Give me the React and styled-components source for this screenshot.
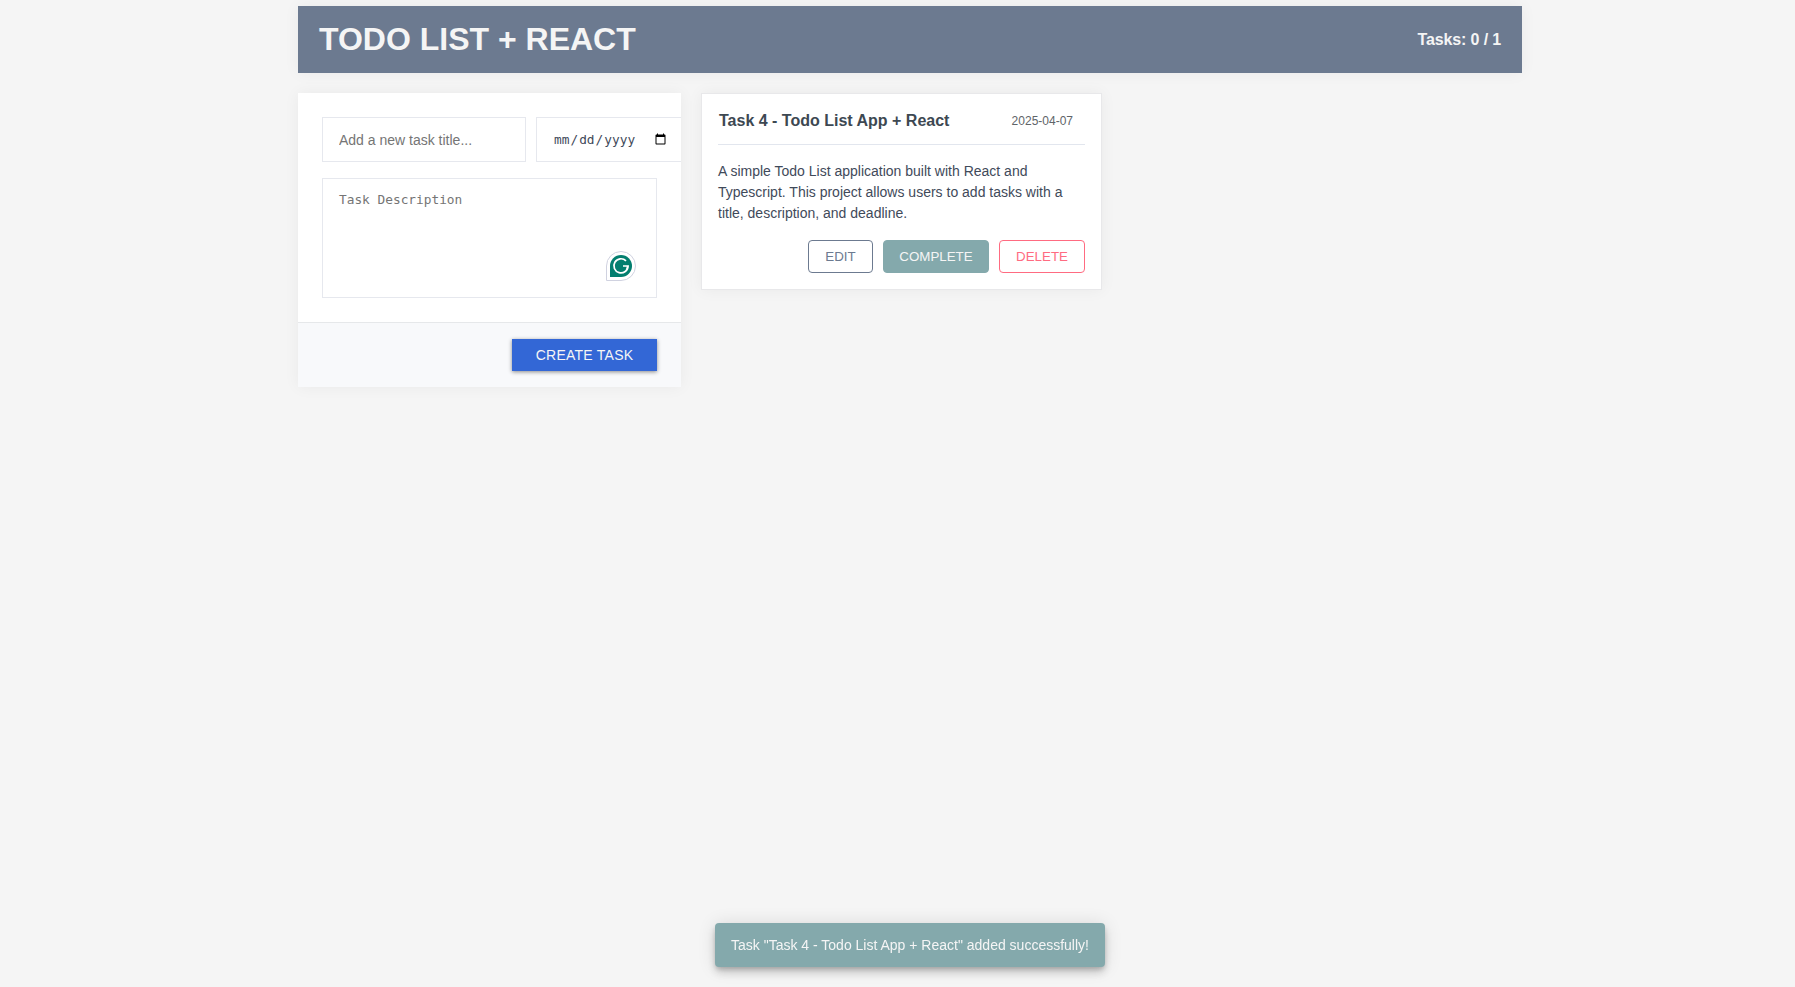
import React from "react";
import styled, { createGlobalStyle, css } from "styled-components";

const GlobalStyle = createGlobalStyle`
  *, *::before, *::after { box-sizing: border-box; }
  body {
    margin: 0;
    min-height: 100vh;
    background: #f5f5f5;
    color: #3d4852;
    font-family: "Liberation Sans", Arial, sans-serif;
    font-size: 14px;
  }
`;

const Page = styled.div`
  width: 1224px;
  margin: 0 0 0 298px;
  padding-top: 6px;
`;

const Header = styled.header`
  display: flex;
  align-items: center;
  justify-content: space-between;
  height: 67px;
  padding: 0 21px;
  background: #6c7a90;
  color: #f5f5f5;
  box-shadow: 0 0 15px rgba(0, 0, 0, 0.05);
`;

const Title = styled.h1`
  margin: 0;
  padding-bottom: 2px;
  font-size: 32px;
  line-height: 36px;
  text-transform: uppercase;
`;

const Counter = styled.span`
  font-size: 16px;
  font-weight: 700;
  letter-spacing: -0.14px;
`;

const Columns = styled.main`
  display: flex;
  align-items: flex-start;
  gap: 20px;
  margin-top: 20px;
`;

const FormCard = styled.form`
  width: 383px;
  overflow: hidden;
  background: #fff;
  box-shadow: 0 0 15px rgba(0, 0, 0, 0.05);
`;

const FormBody = styled.div`
  display: flex;
  flex-direction: column;
  gap: 16px;
  height: 229px;
  padding: 24px;
`;

const FieldRow = styled.div`
  display: flex;
  gap: 10px;
`;

const fieldStyle = css`
  margin: 0;
  border: 1px solid #e6e8ee;
  border-radius: 0;
  background: #fff;
  color: #3f4a5a;
  outline: none;
  padding: 0 16px;
`;

const TitleInput = styled.input`
  ${fieldStyle}
  flex: 0 0 204px;
  min-width: 0;
  height: 45px;
  font: 14px "Liberation Sans", Arial, sans-serif;
`;

const DateInput = styled.input`
  ${fieldStyle}
  flex: 0 0 149px;
  height: 45px;
  font: 12.8px "DejaVu Sans Mono", monospace;
`;

const DescriptionWrap = styled.div`
  position: relative;
  height: 120px;
`;

const Description = styled.textarea`
  ${fieldStyle}
  display: block;
  width: 100%;
  height: 120px;
  padding: 13px 16px;
  resize: none;
  font: 12.8px/16px "DejaVu Sans Mono", monospace;
`;

const AssistantBadge = styled.svg`
  position: absolute;
  right: 21px;
  bottom: 17px;
`;

const FormFooter = styled.div`
  display: flex;
  justify-content: flex-end;
  height: 65px;
  padding: 16px 24px;
  border-top: 1px solid #e6e8ea;
  background: #f8f9fb;
`;

const CreateButton = styled.button`
  width: 145px;
  height: 32px;
  padding: 0;
  border: 0;
  background: #3367d6;
  color: #f5f5f5;
  font: 14px "Liberation Sans", Arial, sans-serif;
  letter-spacing: 0.25px;
  text-transform: uppercase;
  box-shadow: 0 1px 4px rgba(0, 0, 0, 0.45);
`;

const TaskCard = styled.article`
  width: 401px;
  height: 197px;
  padding: 0 16px;
  border: 1px solid #e8e8ea;
  background: #fff;
  box-shadow: 0 0 15px rgba(0, 0, 0, 0.05);
`;

const TaskHeader = styled.div`
  display: flex;
  align-items: center;
  justify-content: space-between;
  height: 51px;
  padding: 4px 12px 0 1px;
  border-bottom: 1px solid #e2e6ee;
`;

const TaskTitle = styled.h2`
  margin: 0;
  font-size: 16px;
  line-height: 20px;
`;

const TaskDate = styled.time`
  color: #606468;
  font-size: 12px;
`;

const TaskText = styled.p`
  margin: 16px 0;
  color: #3f4a5a;
  line-height: 21px;
`;

const Actions = styled.div`
  display: flex;
  justify-content: flex-end;
  gap: 10px;
`;

const ActionButton = styled.button`
  width: ${(p) => p.$width}px;
  height: 33px;
  padding: 0;
  border: 1px solid ${(p) => p.$color};
  border-radius: 4px;
  background: ${(p) => (p.$filled ? p.$color : "#fff")};
  color: ${(p) => (p.$filled ? "#f5f5f5" : p.$color)};
  font: 13.333px "Liberation Sans", Arial, sans-serif;
  text-transform: uppercase;
`;

const Toast = styled.div`
  position: fixed;
  left: 715px;
  bottom: 20px;
  display: flex;
  align-items: center;
  justify-content: center;
  width: 390px;
  height: 44px;
  border-radius: 4px;
  background: #84a9ac;
  color: #f5f5f5;
  white-space: nowrap;
  box-shadow: 0 3px 5px -1px rgba(0, 0, 0, 0.2), 0 6px 10px rgba(0, 0, 0, 0.14),
    0 1px 18px rgba(0, 0, 0, 0.12);
`;

export default function App() {
  return (
    <>
      <GlobalStyle />
      <Page>
        <Header>
          <Title>Todo List + React</Title>
          <Counter>Tasks: 0 / 1</Counter>
        </Header>
        <Columns>
          <FormCard>
            <FormBody>
              <FieldRow>
                <TitleInput placeholder="Add a new task title..." />
                <DateInput type="date" />
              </FieldRow>
              <DescriptionWrap>
                <Description placeholder="Task Description" />
                <AssistantBadge width="30" height="30" viewBox="0 0 30 30" fill="none">
                  <path d="M.5 29.5V15A14.5 14.5 0 1 1 15 29.5Z" fill="#fff" stroke="#d0d2e0" />
                  <path d="M4 26V15A11 11 0 1 1 15 26Z" fill="#027e6f" />
                  <path
                    d="M20 9.8A7.1 7.1 0 1 0 22.1 15H17M22 14.6L20.4 19.6"
                    stroke="#fff"
                    strokeWidth="1.7"
                  />
                </AssistantBadge>
              </DescriptionWrap>
            </FormBody>
            <FormFooter>
              <CreateButton type="button">Create task</CreateButton>
            </FormFooter>
          </FormCard>
          <TaskCard>
            <TaskHeader>
              <TaskTitle>Task 4 - Todo List App + React</TaskTitle>
              <TaskDate>2025-04-07</TaskDate>
            </TaskHeader>
            <TaskText>
              A simple Todo List application built with React and Typescript. This project allows
              users to add tasks with a title, description, and deadline.
            </TaskText>
            <Actions>
              <ActionButton $width={65} $color="#6c7a90">Edit</ActionButton>
              <ActionButton $width={106} $color="#84a9ac" $filled>Complete</ActionButton>
              <ActionButton $width={86} $color="#ff6b81">Delete</ActionButton>
            </Actions>
          </TaskCard>
        </Columns>
      </Page>
      <Toast role="status">Task "Task 4 - Todo List App + React" added successfully!</Toast>
    </>
  );
}
